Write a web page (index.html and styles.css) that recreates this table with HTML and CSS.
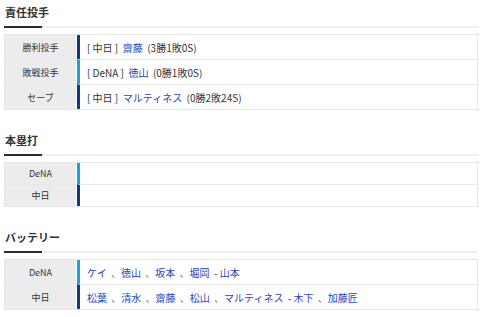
FILE: index.html
```html
<!DOCTYPE html>
<html lang="ja">
<head>
<meta charset="utf-8">
<link rel="stylesheet" href="styles.css">
</head>
<body>
<section class="block">
  <h2 class="ttl">責任投手</h2>
  <table class="tbl">
    <tr><th>勝利投手</th><td class="cd">[ 中日 ]&nbsp; <a href="#">齋藤</a>&nbsp; (3勝1敗0S)</td></tr>
    <tr><th>敗戦投手</th><td class="db">[ DeNA ]&nbsp; <a href="#">徳山</a>&nbsp; (0勝1敗0S)</td></tr>
    <tr><th>セーブ</th><td class="cd">[ 中日 ]&nbsp; <a href="#">マルティネス</a>&nbsp; (0勝2敗24S)</td></tr>
  </table>
</section>
<section class="block">
  <h2 class="ttl">本塁打</h2>
  <table class="tbl tbl-sm">
    <tr><th>DeNA</th><td class="db"></td></tr>
    <tr><th>中日</th><td class="cd"></td></tr>
  </table>
</section>
<section class="block">
  <h2 class="ttl">バッテリー</h2>
  <table class="tbl">
    <tr><th>DeNA</th><td class="db"><a href="#">ケイ</a> <span class="sep">、</span><a href="#">徳山</a> <span class="sep">、</span><a href="#">坂本</a> <span class="sep">、</span><a href="#">堀岡</a>&nbsp; - <a href="#">山本</a></td></tr>
    <tr><th>中日</th><td class="cd"><a href="#">松葉</a> <span class="sep">、</span><a href="#">清水</a> <span class="sep">、</span><a href="#">齋藤</a> <span class="sep">、</span><a href="#">松山</a> <span class="sep">、</span><a href="#">マルティネス</a>&nbsp; - <a href="#">木下</a> <span class="sep">、</span><a href="#">加藤匠</a></td></tr>
  </table>
</section>
</body>
</html>
```
FILE: styles.css
```css
html, body {
  margin: 0;
  background: #fff;
}
body {
  padding: 4px 2px 0 4px;
  font-family: "Noto Sans CJK JP", "Noto Sans", sans-serif;
  color: #333;
}
.block + .block {
  margin-top: 22px;
}
.ttl {
  position: relative;
  margin: 0;
  padding: 0 0 6px 1px;
  font-size: 11px;
  line-height: 16px;
  font-weight: bold;
  color: #333;
  border-bottom: 2px solid #eeeeee;
}
.ttl::after {
  content: "";
  position: absolute;
  left: 0;
  bottom: -2px;
  width: 38px;
  height: 2px;
  background: #2b2b2b;
}
.tbl {
  width: 100%;
  margin-top: 6px;
  border-collapse: separate;
  border-spacing: 0;
  border: 1px solid #e6e6e6;
}
.tbl th {
  width: 71px;
  height: 24px;
  padding: 0;
  background: #ececec;
  border-right: 1px solid #fff;
  font-size: 9px;
  font-weight: normal;
  color: #333;
  text-align: center;
}
.tbl td {
  height: 24px;
  padding: 0 0 0 7px;
  font-size: 10px;
  color: #333;
  white-space: nowrap;
}
.tbl tr + tr th,
.tbl tr + tr td {
  border-top: 1px solid #e8e8e8;
}
.tbl-sm th,
.tbl-sm td {
  height: 21px;
}
.tbl td.cd {
  border-left: 3px solid #0d3c7c;
}
.tbl td.db {
  border-left: 3px solid #1ba0e6;
}
.tbl a {
  color: #2546bd;
  text-decoration: none;
}
.sep {
  color: #667;
  margin-left: 2px;
}
```
